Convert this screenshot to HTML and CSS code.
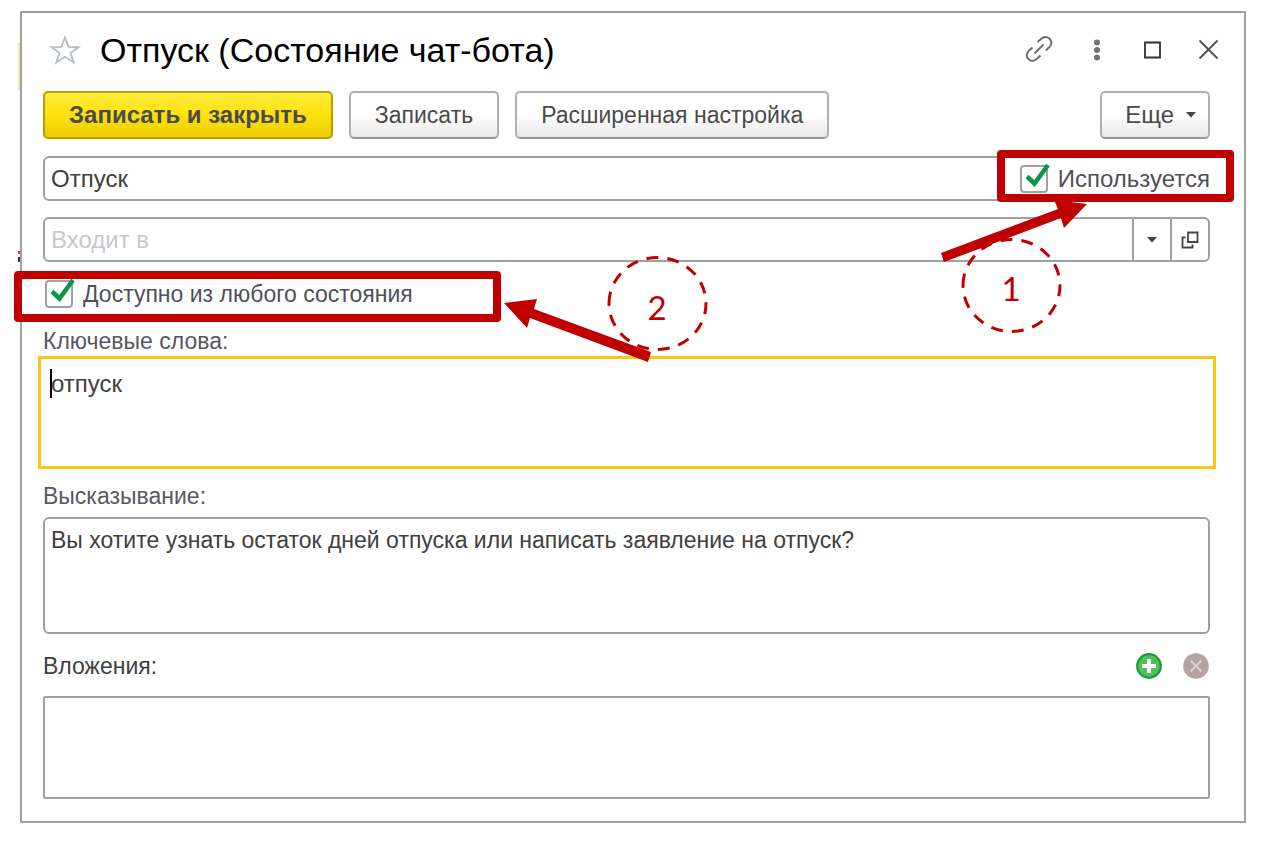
FILE: index.html
```html
<!DOCTYPE html>
<html lang="ru">
<head>
<meta charset="utf-8">
<title>Отпуск (Состояние чат-бота)</title>
<link rel="stylesheet" href="styles.css">
</head>
<body>
<main class="window">
  <header class="titlebar">
    <button class="icon-btn star" type="button" aria-label="В избранное">
      <svg width="32" height="30" viewBox="0 0 32 30"><path d="M16 2.500l3.500 9.300 10 .2-8 6 3.200 9.500-8.700-5.700-8.700 5.700 3.200-9.500-8-6 10-.2z" fill="none" stroke="#b4bcc4" stroke-width="1.800"/></svg>
    </button>
    <h1 class="title">Отпуск (Состояние чат-бота)</h1>
    <div class="window-tools">
      <button class="icon-btn" type="button" aria-label="Ссылка">
        <svg width="30" height="30" viewBox="0 0 30 30" fill="none" stroke="#686868" stroke-width="1.800"><path d="M14.500 7l3.700-3.200c2.700-2.200 5.800-2.300 8.200-.3 2.500 2.400 2.400 5.600.2 8.300L23 15.500M17.500 20.500l-3.700 3.500c-2.700 2.200-5.800 2.300-8 .3-2.500-2.400-2.400-5.600-.2-8.100L9.500 12.500M11.500 18.500l9-9"/></svg>
      </button>
      <button class="icon-btn" type="button" aria-label="Меню">
        <svg width="30" height="30" viewBox="0 0 30 30" fill="#707070"><circle cx="17" cy="7.500" r="3"/><circle cx="17" cy="15" r="3"/><circle cx="17" cy="22.500" r="3"/></svg>
      </button>
      <button class="icon-btn" type="button" aria-label="Развернуть">
        <svg width="30" height="30" viewBox="0 0 30 30"><path d="M8 7.500h15v15H8z" fill="none" stroke="#303030" stroke-width="1.800"/></svg>
      </button>
      <button class="icon-btn" type="button" aria-label="Закрыть">
        <svg width="30" height="30" viewBox="0 0 30 30"><path d="M5.500 5.500l18 18M23.500 5.500l-18 18" stroke="#505050" stroke-width="1.800"/></svg>
      </button>
    </div>
  </header>

  <div class="toolbar">
    <button class="btn btn-primary" type="button">Записать и закрыть</button>
    <button class="btn" type="button">Записать</button>
    <button class="btn" type="button">Расширенная настройка</button>
    <button class="btn btn-more" type="button">Еще
      <svg width="10" height="6" viewBox="0 0 10 6"><path d="M0 0h10L5 5.500z" fill="#444"/></svg>
    </button>
  </div>

  <div class="name-row">
    <input class="field" type="text" value="Отпуск" aria-label="Наименование">
    <label class="check check-used">
      <span class="box"><input type="checkbox" checked><svg class="tick" width="28" height="28" viewBox="0 0 28 28"><path d="M7 11.500l7.500 7L28 0" fill="none" stroke="#0a9648" stroke-width="4.500"/></svg></span>
      <span>Используется</span>
      <span class="frame frame-used"></span>
    </label>
  </div>

  <div class="combo">
    <input class="combo-input" type="text" placeholder="Входит в" aria-label="Входит в">
    <button class="combo-btn" type="button" aria-label="Выбрать из списка">
      <svg width="10" height="6" viewBox="0 0 10 6"><path d="M0 0h10L5 5.500z" fill="#444"/></svg>
    </button>
    <button class="combo-btn" type="button" aria-label="Открыть">
      <svg width="18" height="18" viewBox="0 0 18 18" fill="none" stroke="#444" stroke-width="1.800"><path d="M7 1.500h9.500v9.500H7zM4.500 6.500h-3v10h10v-3"/></svg>
    </button>
  </div>

  <label class="check check-any">
    <span class="box"><input type="checkbox" checked><svg class="tick" width="28" height="28" viewBox="0 0 28 28"><path d="M7 11.500l7.500 7L28 0" fill="none" stroke="#0a9648" stroke-width="4.500"/></svg></span>
    <span>Доступно из любого состояния</span>
    <span class="frame frame-any"></span>
  </label>

  <label class="caption caption-muted" for="keywords">Ключевые слова:</label>
  <div class="focus-wrap">
    <textarea class="area area-focus" id="keywords">отпуск</textarea>
    <span class="caret"></span>
  </div>

  <label class="caption caption-muted caption-phrase" for="phrase">Высказывание:</label>
  <textarea class="area area-phrase" id="phrase">Вы хотите узнать остаток дней отпуска или написать заявление на отпуск?</textarea>

  <div class="attach-head">
    <span class="caption">Вложения:</span>
    <div class="attach-tools">
      <button class="icon-btn" type="button" aria-label="Добавить">
        <svg width="26" height="26" viewBox="0 0 26 26"><circle cx="13" cy="13" r="11.800" fill="#4fbf5c" stroke="#219a3a" stroke-width="2.200"/><path d="M13 6v14M6 13h14" stroke="#fff" stroke-width="4"/></svg>
      </button>
      <button class="icon-btn" type="button" aria-label="Удалить">
        <svg width="26" height="26" viewBox="0 0 26 26"><circle cx="13" cy="13" r="12.800" fill="#b5a3a3"/><path d="M7.500 7.500l11 11M18.500 7.500l-11 11" stroke="#dccfcf" stroke-width="2"/></svg>
      </button>
    </div>
  </div>
  <div class="attachments"></div>

  <svg class="callout callout-one" width="150" height="140" viewBox="0 0 150 140" role="img" aria-label="1">
    <path d="M1 58L118 14L114 5L147 9L124 33L121 23L4 67z" fill="#c00000"/>
    <path class="ring" d="M23 90.500a48.500 46 0 0 1 97 0a48.500 46 0 0 1-97 0"/>
    <text class="digit" x="71" y="106">1</text>
  </svg>
  <svg class="callout callout-two" width="210" height="120" viewBox="0 0 210 120" role="img" aria-label="2">
    <path d="M4 53L37 49L34 59L151 102L148 112L30 68L27 78z" fill="#c00000"/>
    <path class="ring" d="M109 53.500a48.500 46 0 0 1 97 0a48.500 46 0 0 1-97 0"/>
    <text class="digit" x="157" y="70">2</text>
  </svg>
</main>
</body>
</html>
```

FILE: styles.css
```css
* {
  box-sizing: border-box;
}

body {
  margin: 0;
  padding: 11px 23px 19px 20px;
  background: #fff;
  color: #404040;
  font: 23px/28px "Liberation Sans", Arial, sans-serif;
}

button,
input,
textarea {
  margin: 0;
  font: inherit;
  color: inherit;
}

svg {
  display: block;
}

.window {
  position: relative;
  display: flex;
  flex-direction: column;
  padding: 16px 34px 22px 21px;
  border: 2px solid #a0a0a0;
}

/* slivers of the form lying behind the window */
.window::before,
.window::after {
  content: "";
  position: absolute;
  left: -4px;
  top: 30px;
  width: 2px;
  height: 48px;
  background: #f5e2a8;
}

.window::after {
  top: 238px;
  height: 11px;
  background: linear-gradient(#a05030 3px, #fff 3px, #fff 6px, #303060 6px);
}

.titlebar {
  display: flex;
  align-items: center;
  height: 42px;
}

.icon-btn {
  padding: 0;
  border: 0;
  background: none;
}

.star {
  margin-left: 6px;
}

.title {
  margin: 0 0 0 19px;
  color: #000;
  font-size: 34px;
  font-weight: 400;
  line-height: 40px;
}

.window-tools {
  display: flex;
  gap: 27px;
  margin: 0 -14px 0 auto;
}

.toolbar {
  display: flex;
  gap: 16px;
  margin-top: 20px;
}

.btn {
  height: 48px;
  padding: 0 24px;
  border: 2px solid #b0b0b0;
  border-bottom-color: #999;
  border-radius: 5px;
  background: linear-gradient(#fff 50%, #e8e8e8);
  color: #4a4a4a;
}

.btn-primary {
  border-color: #b8a000;
  background: linear-gradient(#ffec40, #ffe30f 45%, #eccf00);
  font-size: 24px;
  font-weight: 700;
}

.btn-more {
  display: flex;
  align-items: center;
  gap: 12px;
  margin-left: auto;
  padding: 0 12px 0 23px;
  font-size: 24px;
}

.name-row {
  display: flex;
  gap: 18px;
  margin-top: 17px;
}

.field {
  flex: 1;
  min-width: 0;
  height: 45px;
  padding: 0 6px;
  border: 2px solid #a0a0a0;
  border-radius: 6px 0 0 6px;
  background: #fff;
  font-size: 24px;
}

.check {
  position: relative;
  display: flex;
  align-items: center;
  gap: 10px;
  color: #505058;
}

.check-used {
  font-size: 24px;
}

.box {
  position: relative;
  width: 28px;
  height: 28px;
}

.box input {
  display: block;
  width: 28px;
  height: 28px;
  border: 2px solid #a0a0a0;
  border-radius: 4px;
  background: #fff;
  appearance: none;
}

.tick {
  position: absolute;
  left: 0;
  top: 0;
  overflow: visible;
}

.frame {
  position: absolute;
  border: 8px solid #c00000;
  border-radius: 4px;
  pointer-events: none;
}

.frame-used {
  inset: -6px -24px -1px -23px;
}

.check-any {
  align-self: flex-start;
  margin: 18px 0 0 2px;
}

.frame-any {
  inset: -9px -88px -14px -31px;
}

.combo {
  display: flex;
  height: 45px;
  margin-top: 16px;
  border: 2px solid #a0a0a0;
  border-radius: 6px;
}

.combo-input {
  flex: 1;
  min-width: 0;
  padding: 0 6px;
  border: 0;
  background: none;
  font-size: 24px;
}

.combo-input::placeholder {
  color: #c8c8d0;
  opacity: 1;
}

.combo-btn {
  display: flex;
  align-items: center;
  justify-content: center;
  width: 38px;
  padding: 0;
  border: 0;
  border-left: 2px solid #a0a0a0;
  background: none;
}

.caption {
  color: #404040;
}

.caption-muted {
  margin-top: 19px;
  color: #585860;
}

.caption-phrase {
  margin-top: 13px;
}

.focus-wrap {
  position: relative;
  display: flex;
  margin: 1px -6px 0 -5px;
}

.area {
  display: block;
  width: 100%;
  padding: 7px 6px;
  border: 2px solid #a0a0a0;
  border-radius: 6px;
  background: #fff;
  outline: 0;
  resize: none;
}

.area-focus {
  height: 113px;
  padding: 11px 10px;
  border: 3px solid #fac814;
  border-radius: 0;
  font-size: 24px;
}

.caret {
  position: absolute;
  left: 12px;
  top: 13px;
  width: 2px;
  height: 29px;
  background: #000;
}

.area-phrase {
  height: 117px;
  margin-top: 7px;
}

.attach-head {
  display: flex;
  align-items: center;
  justify-content: space-between;
  margin-top: 18px;
}

.attach-tools {
  display: flex;
  gap: 21px;
  margin-right: 1px;
}

.attachments {
  height: 103px;
  margin-top: 16px;
  border: 2px solid #a0a0a0;
  border-radius: 2px;
}

.callout {
  position: absolute;
  pointer-events: none;
}

.callout-one {
  top: 182px;
  right: 154px;
}

.callout-two {
  left: 478px;
  top: 237px;
}

.ring {
  fill: none;
  stroke: #c00000;
  stroke-width: 3;
  stroke-dasharray: 12 9;
}

.digit {
  fill: #c00000;
  font: 33px Lato, sans-serif;
  text-anchor: middle;
}
```
